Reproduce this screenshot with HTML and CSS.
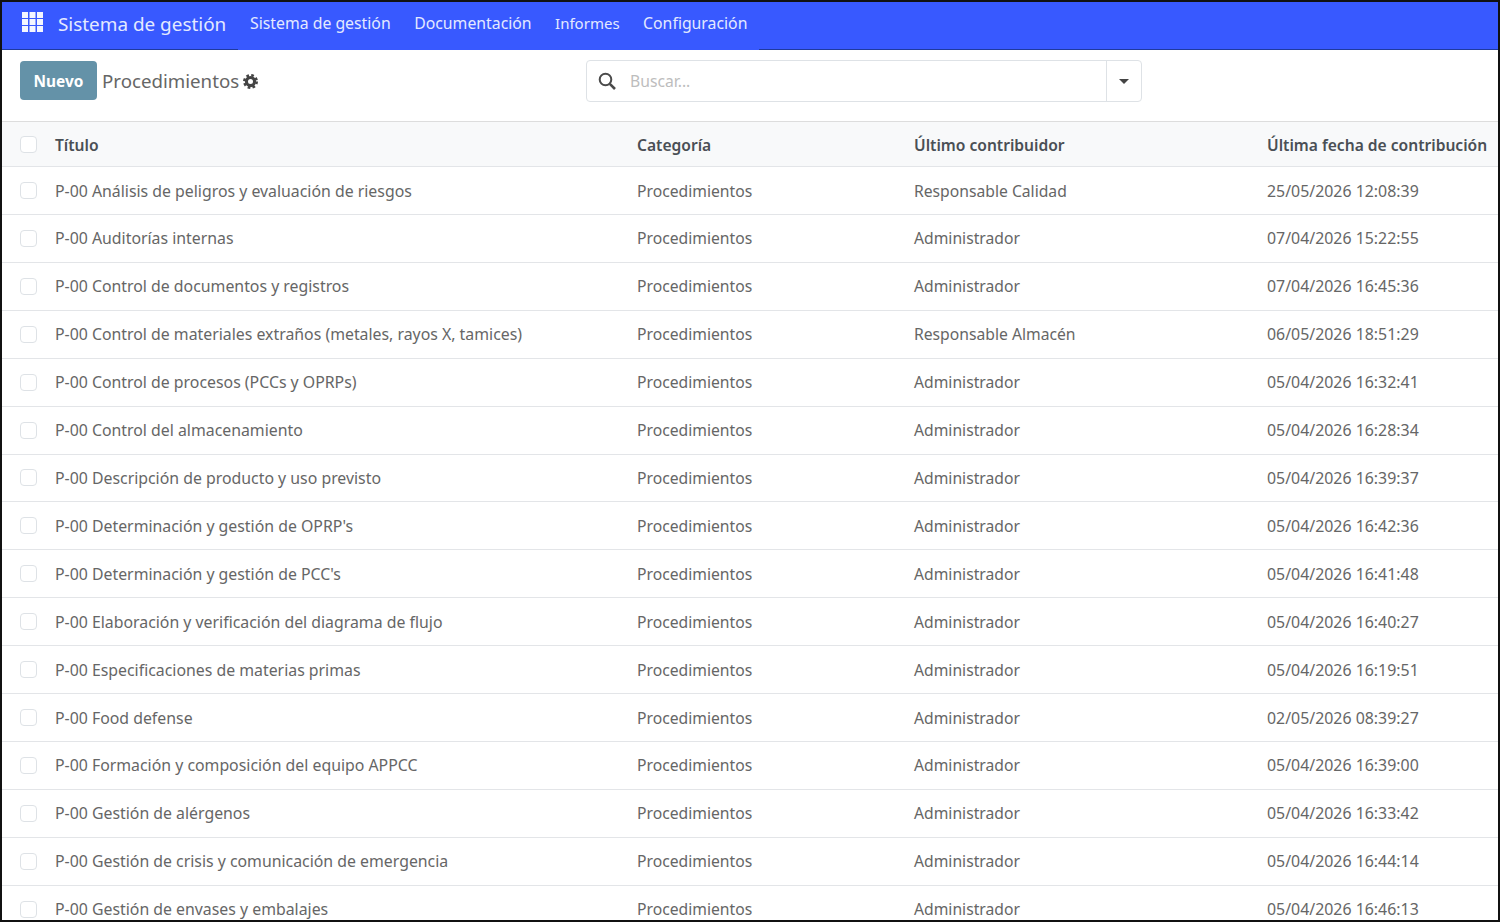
FILE: index.html
```html
<!DOCTYPE html>
<html>
  <head>
    <meta charset="UTF-8">
    <title>Procedimientos</title>
    <link rel="stylesheet" href="styles.css">
  </head>
  <body>
    <nav class="navbar">
      <svg class="apps-icon" width="21" height="20" viewBox="0 0 21 20" fill="#f4f6ff">
        <rect x="0" y="0" width="6" height="6"/><rect x="7.5" y="0" width="6" height="6"/><rect x="15" y="0" width="6" height="6"/>
        <rect x="0" y="7" width="6" height="6"/><rect x="7.5" y="7" width="6" height="6"/><rect x="15" y="7" width="6" height="6"/>
        <rect x="0" y="14" width="6" height="6"/><rect x="7.5" y="14" width="6" height="6"/><rect x="15" y="14" width="6" height="6"/>
      </svg>
      <span class="brand">Sistema de gestión</span>
      <div class="menu">
        <a>Sistema de gestión</a>
        <a>Documentación</a>
        <a class="short">Informes</a>
        <a>Configuración</a>
      </div>
    </nav>

    <div class="control-panel">
      <div class="left-side">
        <button class="btn-new">Nuevo</button>
        <span class="page-title">Procedimientos</span>
        <svg class="gear" width="15" height="15" viewBox="0 0 24 24">
          <circle cx="12" cy="12" r="6.5" fill="none" stroke="#444" stroke-width="5"/>
          <circle cx="12" cy="12" r="10" fill="none" stroke="#444" stroke-width="4" stroke-dasharray="4.2 3.65"/>
        </svg>
      </div>
      <div class="search-box">
        <svg class="search-icon" width="18" height="18" viewBox="0 0 18 18" fill="none" stroke="#4a4a4a" stroke-width="2">
          <circle cx="7.5" cy="7.5" r="5.8"/>
          <path d="M11.8 11.8L17 17" stroke-width="2.6"/>
        </svg>
        <span class="placeholder">Buscar...</span>
        <div class="search-toggle"><span class="caret"></span></div>
      </div>
    </div>

    <table class="list">
      <colgroup>
        <col class="col-check">
        <col class="col-title">
        <col class="col-cat">
        <col class="col-user">
        <col class="col-date">
      </colgroup>
      <thead>
        <tr>
          <th><span class="check"></span></th>
          <th>Título</th>
          <th>Categoría</th>
          <th>Último contribuidor</th>
          <th>Última fecha de contribución</th>
        </tr>
      </thead>
      <tbody>
        <tr><td><span class="check"></span></td><td class="title">P-00 Análisis de peligros y evaluación de riesgos</td><td>Procedimientos</td><td>Responsable Calidad</td><td class="date">25/05/2026 12:08:39</td></tr>
        <tr><td><span class="check"></span></td><td class="title">P-00 Auditorías internas</td><td>Procedimientos</td><td>Administrador</td><td class="date">07/04/2026 15:22:55</td></tr>
        <tr><td><span class="check"></span></td><td class="title">P-00 Control de documentos y registros</td><td>Procedimientos</td><td>Administrador</td><td class="date">07/04/2026 16:45:36</td></tr>
        <tr><td><span class="check"></span></td><td class="title">P-00 Control de materiales extraños (metales, rayos X, tamices)</td><td>Procedimientos</td><td>Responsable Almacén</td><td class="date">06/05/2026 18:51:29</td></tr>
        <tr><td><span class="check"></span></td><td class="title">P-00 Control de procesos (PCCs y OPRPs)</td><td>Procedimientos</td><td>Administrador</td><td class="date">05/04/2026 16:32:41</td></tr>
        <tr><td><span class="check"></span></td><td class="title">P-00 Control del almacenamiento</td><td>Procedimientos</td><td>Administrador</td><td class="date">05/04/2026 16:28:34</td></tr>
        <tr><td><span class="check"></span></td><td class="title">P-00 Descripción de producto y uso previsto</td><td>Procedimientos</td><td>Administrador</td><td class="date">05/04/2026 16:39:37</td></tr>
        <tr><td><span class="check"></span></td><td class="title">P-00 Determinación y gestión de OPRP's</td><td>Procedimientos</td><td>Administrador</td><td class="date">05/04/2026 16:42:36</td></tr>
        <tr><td><span class="check"></span></td><td class="title">P-00 Determinación y gestión de PCC's</td><td>Procedimientos</td><td>Administrador</td><td class="date">05/04/2026 16:41:48</td></tr>
        <tr><td><span class="check"></span></td><td class="title">P-00 Elaboración y verificación del diagrama de flujo</td><td>Procedimientos</td><td>Administrador</td><td class="date">05/04/2026 16:40:27</td></tr>
        <tr><td><span class="check"></span></td><td class="title">P-00 Especificaciones de materias primas</td><td>Procedimientos</td><td>Administrador</td><td class="date">05/04/2026 16:19:51</td></tr>
        <tr><td><span class="check"></span></td><td class="title">P-00 Food defense</td><td>Procedimientos</td><td>Administrador</td><td class="date">02/05/2026 08:39:27</td></tr>
        <tr><td><span class="check"></span></td><td class="title">P-00 Formación y composición del equipo APPCC</td><td>Procedimientos</td><td>Administrador</td><td class="date">05/04/2026 16:39:00</td></tr>
        <tr><td><span class="check"></span></td><td class="title">P-00 Gestión de alérgenos</td><td>Procedimientos</td><td>Administrador</td><td class="date">05/04/2026 16:33:42</td></tr>
        <tr><td><span class="check"></span></td><td class="title">P-00 Gestión de crisis y comunicación de emergencia</td><td>Procedimientos</td><td>Administrador</td><td class="date">05/04/2026 16:44:14</td></tr>
        <tr><td><span class="check"></span></td><td class="title">P-00 Gestión de envases y embalajes</td><td>Procedimientos</td><td>Administrador</td><td class="date">05/04/2026 16:46:13</td></tr>
      </tbody>
    </table>
  </body>
</html>
```

FILE: styles.css
```css
* {
  box-sizing: border-box;
}
html,
body {
  height: 922px;
  overflow: hidden;
}
body {
  margin: 0;
  border: 2px solid #111;
  background: #fff;
  color: #666;
  font-family: "Noto Sans", sans-serif;
  font-size: 15.7px;
}

/* top bar */
.navbar {
  display: flex;
  align-items: center;
  height: 48px;
  padding-left: 20px;
  background-color: #3859ff;
  border-bottom: 1px solid #1f3a9e;
  color: #e4e9ff;
}
.apps-icon {
  margin-right: 15px;
  margin-top: -8px;
}
.brand {
  width: 180px;
  margin-top: -4px;
  font-size: 18.9px;
}
.menu {
  display: flex;
  align-self: stretch;
  align-items: center;
  gap: 23.5px;
  height: 48px;
  padding: 0 12px;
  background-color: #3859ff;
  margin-bottom: -1px;
  font-size: 15.8px;
}
.menu a {
  margin-top: -6px;
}
.menu a.short {
  font-size: 15px;
}

/* control panel */
.control-panel {
  display: flex;
  height: 72px;
  padding: 10px 18px 0;
  border-bottom: 1px solid #ddd;
}
.left-side {
  display: flex;
  align-items: flex-start;
  width: 566px;
}
.btn-new {
  width: 77px;
  height: 39px;
  margin-top: 1px;
  padding: 2px 0 0;
  border: none;
  border-radius: 4px;
  background-color: #6492a8;
  color: #fff;
  font-family: inherit;
  font-size: 15.4px;
  font-weight: 700;
}
.page-title {
  margin-left: 5px;
  font-size: 18.7px;
  line-height: 42px;
  color: #666;
}
.gear {
  margin: 14px 0 0 4px;
}
.search-box {
  display: flex;
  align-items: center;
  width: 556px;
  height: 42px;
  border: 1px solid #dee2e6;
  border-radius: 4px;
}
.search-icon {
  margin: 0 14px 0 11px;
}
.placeholder {
  flex-grow: 1;
  color: #bdbdbd;
}
.search-toggle {
  display: flex;
  align-items: center;
  justify-content: center;
  width: 35px;
  height: 100%;
  border-left: 1px solid #dee2e6;
}
.caret {
  width: 0;
  height: 0;
  border-top: 5px solid #444;
  border-left: 5px solid transparent;
  border-right: 5px solid transparent;
}

/* list */
.list {
  width: 1496px;
  table-layout: fixed;
  border-collapse: collapse;
}
.col-check {
  width: 41px;
}
.col-title {
  width: 582px;
}
.col-cat {
  width: 277px;
}
.col-user {
  width: 353px;
}
.col-date {
  width: 243px;
}
.list th,
.list td {
  padding: 0 12px;
  text-align: left;
  white-space: nowrap;
  border-bottom: 1px solid #e3e5e8;
}
.list th:first-child,
.list td:first-child {
  padding: 0 0 0 18px;
}
.list th {
  height: 44.6px;
  padding-top: 1px;
  background-color: #f8f9fa;
  color: #4a4f55;
  font-size: 15.6px;
  font-weight: 600;
}
.list td {
  height: 47.92px;
}
.list td.title {
  font-size: 15.85px;
}
.list td.date {
  font-size: 15.9px;
}
.check {
  display: block;
  width: 17px;
  height: 17px;
  border: 1px solid #dee2e6;
  border-radius: 4px;
  background: #fff;
}
```
